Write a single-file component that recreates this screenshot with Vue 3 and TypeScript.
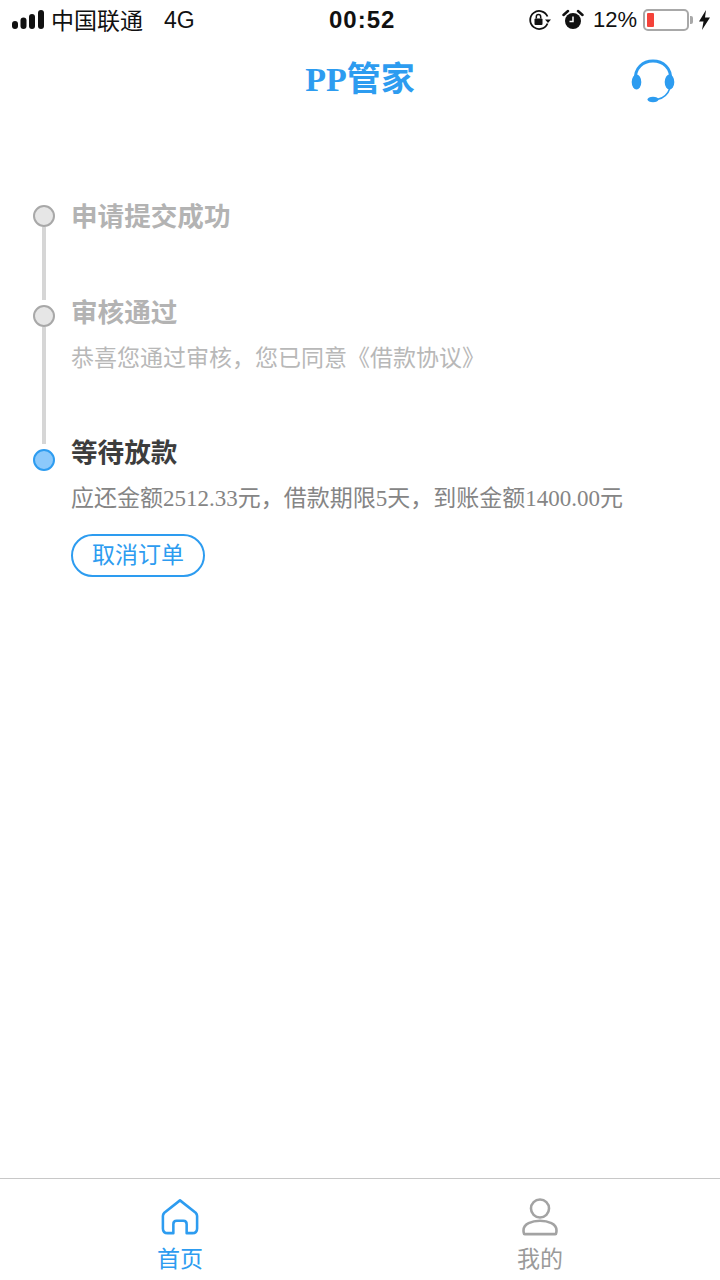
<script setup lang="ts">
interface Step {
  title: string
  desc?: string
  state: 'done' | 'active'
  railHeight: number
  titleOffset: number
}
const steps: Step[] = [
  { title: '申请提交成功', state: 'done', railHeight: 73, titleOffset: -2 },
  { title: '审核通过', desc: '恭喜您通过审核，您已同意《借款协议》', state: 'done', railHeight: 117, titleOffset: -6 },
  { title: '等待放款', desc: '应还金额2512.33元，借款期限5天，到账金额1400.00元', state: 'active', railHeight: 0, titleOffset: -10 },
]
</script>

<template>
  <div class="page">
    <div class="status">
      <div class="status-left">
        <svg class="signal" width="32" height="20" viewBox="0 0 32 20">
          <rect x="0" y="11" width="6" height="8" rx="3" />
          <rect x="8.500" y="7.500" width="6" height="11.500" rx="3" />
          <rect x="17" y="4" width="6" height="15" rx="3" />
          <rect x="26" y="0" width="6" height="19" rx="3" />
        </svg>
        <span class="carrier">中国联通</span>
        <span class="net">4G</span>
      </div>
      <div class="time">00:52</div>
      <div class="status-right">
        <svg class="lock" width="24" height="22" viewBox="0 0 24 22" fill="none" stroke="#111">
          <path d="M19.500 7.500A9 9 0 1 0 19.500 14.500" stroke-width="1.800" />
          <path d="M17 10.500h6l-3 3.500z" fill="#111" stroke="none" />
          <rect x="6.500" y="9.500" width="8" height="6.500" rx="1" fill="#111" stroke="none" />
          <path d="M8.300 9.500V7.800a2.200 2.200 0 0 1 4.400 0v1.700" stroke-width="1.500" />
        </svg>
        <svg class="alarm" width="22" height="22" viewBox="0 0 22 22">
          <circle cx="11" cy="12" r="8" fill="#111" />
          <path d="M11 7.500V12.500H7.500" fill="none" stroke="#fff" stroke-width="1.500" />
          <path d="M1.500 6L6 2M20.500 6L16 2" stroke="#111" stroke-width="2.500" stroke-linecap="round" />
        </svg>
        <span class="pct">12%</span>
        <div class="battery">
          <div class="battery-body"><div class="battery-fill"></div></div>
          <div class="battery-cap"></div>
        </div>
        <svg class="bolt" width="11" height="20" viewBox="0 0 11 20">
          <path d="M7 0L0 11.500H4.500L3 20L11 7.500H6z" fill="#111" />
        </svg>
      </div>
    </div>

    <header class="nav">
      <h1 class="title">PP管家</h1>
      <svg class="headset" width="46" height="48" viewBox="0 0 46 48" fill="none">
        <path d="M5.500 22C4.500 10 13 3 23 3S41.500 10 40.500 22" stroke="#2d9cf0" stroke-width="3" />
        <ellipse cx="6.500" cy="24" rx="4.800" ry="7.500" fill="#2d9cf0" />
        <ellipse cx="39.500" cy="24" rx="4.800" ry="7.500" fill="#2d9cf0" />
        <path d="M40 30C38 36 33 40.500 27 41.500" stroke="#2d9cf0" stroke-width="1.600" />
        <ellipse cx="23" cy="41.500" rx="5.500" ry="2.800" fill="#2d9cf0" />
      </svg>
    </header>

    <main class="timeline">
      <section v-for="step in steps" :key="step.title" class="step">
        <div class="rail">
          <span class="dot" :class="step.state"></span>
          <span v-if="step.railHeight" class="line" :style="{ height: step.railHeight + 'px' }"></span>
        </div>
        <div class="body" :style="{ marginTop: step.titleOffset + 'px' }">
          <div class="step-title" :class="step.state">{{ step.title }}</div>
          <div v-if="step.desc" class="step-desc" :class="step.state">{{ step.desc }}</div>
          <button v-if="step.state === 'active'" class="cancel" type="button">取消订单</button>
        </div>
      </section>
    </main>

    <footer class="tabs">
      <div class="tab on">
        <svg width="38" height="40" viewBox="0 0 40 40" fill="none" stroke="#2d9cf0" stroke-width="2.700" stroke-linejoin="round">
          <path d="M20 2.500L3.500 15.500C2.500 16.500 2 17.500 2 19V32C2 35 4 37 7 37H13V27.500C13 25.500 14.500 24 16.500 24H23.500C25.500 24 27 25.500 27 27.500V37H33C36 37 38 35 38 32V19C38 17.500 37.500 16.500 36.500 15.500z" />
        </svg>
        <span>首页</span>
      </div>
      <div class="tab">
        <svg width="38" height="40" viewBox="0 0 40 40" fill="none" stroke="#a3a3a3" stroke-width="2.700">
          <circle cx="20" cy="11" r="9.500" />
          <path d="M3 37C2 33 3 29 8 26.500C11.500 24.800 15 24 20 24S28.500 24.800 32 26.500C37 29 38 33 37 37C37 37.500 36.500 38 36 38H4C3.500 38 3 37.500 3 37z" />
        </svg>
        <span>我的</span>
      </div>
    </footer>
  </div>
</template>

<style>
html, body { margin: 0; background: #fff; }
</style>

<style scoped>
.page {
  position: relative;
  width: 720px;
  height: 1280px;
  display: flex;
  flex-direction: column;
  background: #fff;
  font-family: "Liberation Serif", "Noto Sans CJK SC", serif;
  overflow: hidden;
}
.status {
  height: 40px;
  display: flex;
  align-items: center;
  justify-content: space-between;
  padding: 0 10px 0 12px;
  font-family: "Liberation Sans", "Noto Sans CJK SC", sans-serif;
  color: #111;
  font-size: 23px;
  position: relative;
}
.status-left, .status-right { display: flex; align-items: center; }
.signal { fill: #111; margin-right: 7px; }
.carrier { position: relative; top: -1px; }
.net { margin-left: 21px; font-size: 23px; }
.time {
  position: absolute;
  left: 329px;
  top: 5px;
  font-size: 24px;
  font-weight: 700;
  letter-spacing: 1px;
  line-height: 30px;
}
.lock { margin-right: 10px; }
.alarm { margin-right: 9px; }
.pct { font-size: 22px; margin-right: 6px; }
.battery { display: flex; align-items: center; margin-right: 6px; }
.battery-body {
  width: 46px;
  height: 22px;
  border: 2px solid #a8a8a8;
  border-radius: 5px;
  padding: 2px;
  box-sizing: border-box;
}
.battery-fill { width: 7px; height: 100%; background: #f4423a; border-radius: 1px; }
.battery-cap { width: 3px; height: 8px; margin-left: 1px; background: #a8a8a8; border-radius: 0 2px 2px 0; }
.nav {
  position: relative;
  height: 76px;
  display: flex;
  align-items: center;
  justify-content: center;
}
.title {
  margin: 4px 0 0;
  font-size: 34px;
  line-height: 44px;
  font-weight: 700;
  color: #2d9cf0;
}
.headset { position: absolute; left: 630px; top: 18px; }
.timeline {
  flex: 1;
  display: flex;
  flex-direction: column;
  padding: 89px 0 0 33px;
  gap: 5px;
}
.step { display: flex; align-items: flex-start; }
.rail {
  width: 22px;
  flex: none;
  display: flex;
  flex-direction: column;
  align-items: center;
  margin-right: 16px;
}
.dot {
  width: 22px;
  height: 22px;
  box-sizing: border-box;
  border-radius: 50%;
  border: 2px solid #a8a8a8;
  background: #e6e6e6;
}
.dot.active { border-color: #2d9cf0; background: #8cc9fb; }
.line { width: 4px; background: #d6d6d6; }
.body { flex: 1; min-width: 0; }
.step-title {
  font-family: "Noto Sans CJK SC", sans-serif;
  font-size: 26.600px;
  line-height: 24px;
  font-weight: 700;
}
.step-title.done { color: #b3b3b3; }
.step-title.active { color: #3d3d3d; }
.step-desc {
  margin-top: 24px;
  font-size: 23px;
  line-height: 24px;
  white-space: nowrap;
}
.step-desc.done { color: #b8b8b8; }
.step-desc.active { color: #858585; }
.cancel {
  display: block;
  margin-top: 23px;
  width: 134px;
  height: 43px;
  padding: 0 0 5px;
  box-sizing: border-box;
  background: #fff;
  border: 2px solid #2d9cf0;
  border-radius: 22px;
  color: #2d9cf0;
  font-family: "Noto Sans CJK SC", sans-serif;
  font-size: 23px;
  line-height: 30px;
}
.tabs {
  height: 102px;
  box-sizing: border-box;
  border-top: 1px solid #c8c8c8;
  display: flex;
}
.tab {
  flex: 1;
  display: flex;
  flex-direction: column;
  align-items: center;
  padding-top: 18px;
  font-family: "Noto Sans CJK SC", sans-serif;
  font-size: 23px;
  line-height: 26px;
  color: #9a9a9a;
}
.tab span { margin-top: 7px; }
.tab.on { color: #2d9cf0; }
</style>
